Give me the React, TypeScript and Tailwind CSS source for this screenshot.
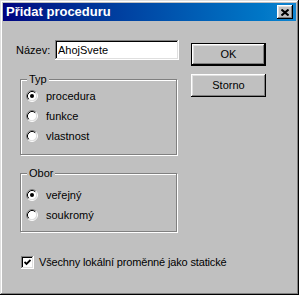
const Radio = ({ checked }: { checked?: boolean }) => (
  <svg width="12" height="12" viewBox="0 0 12 12" className="shrink-0">
    <circle cx="6" cy="6" r="4.5" fill="#fff" />
    <path d="M2.11 9.89 A5.5 5.5 0 0 1 9.89 2.11" stroke="#808080" fill="none" />
    <path d="M9.89 2.11 A5.5 5.5 0 0 1 2.11 9.89" stroke="#fff" fill="none" />
    <path d="M2.82 9.18 A4.5 4.5 0 0 1 9.18 2.82" stroke="#000" fill="none" />
    <path d="M9.18 2.82 A4.5 4.5 0 0 1 2.82 9.18" stroke="#dfdfdf" fill="none" />
    {checked && <circle cx="6" cy="6" r="2" fill="#000" />}
  </svg>
);

const Option = ({ label, checked }: { label: string; checked?: boolean }) => (
  <div className="flex items-center h-[20px] gap-[8px]">
    <Radio checked={checked} />
    <span>{label}</span>
  </div>
);

const btn =
  "w-[75px] h-[23px] flex items-center justify-center bg-[#c0c0c0] shadow-[inset_-1px_-1px_#000,inset_1px_1px_#fff,inset_-2px_-2px_#808080,inset_2px_2px_#dfdfdf]";

export default function App() {
  return (
    <div className="w-[299px] h-[295px] bg-[#c0c0c0] p-[3px] flex flex-col text-[11px] text-black font-['Liberation_Sans',Arial,sans-serif] shadow-[inset_-1px_-1px_#000,inset_1px_1px_#dfdfdf,inset_-2px_-2px_#808080,inset_2px_2px_#fff]">
      {/* title bar */}
      <div className="h-[18px] flex items-center justify-between pl-[3px] pr-[3px] bg-gradient-to-r from-[#000080] to-[#1084d0]">
        <span className="text-white font-bold text-[13px]">Přidat proceduru</span>
        <button className="w-[16px] h-[14px] flex items-center justify-center bg-[#c0c0c0] shadow-[inset_-1px_-1px_#000,inset_1px_1px_#fff,inset_-2px_-2px_#808080,inset_2px_2px_#dfdfdf]">
          <svg width="8" height="7" viewBox="0 0 8 7">
            <path d="M0.5 0.5 L7.5 6.5 M7.5 0.5 L0.5 6.5" stroke="#000" strokeWidth="2" />
          </svg>
        </button>
      </div>

      <div className="flex flex-1">
        <div className="w-[176px] pl-[13px]">
          <div className="mt-[19px] h-[20px] flex items-center gap-[6px]">
            <span className="w-[33px]">Název:</span>
            <input
              defaultValue="AhojSvete"
              className="w-[124px] h-[20px] pl-[3px] bg-white outline-none shadow-[inset_-1px_-1px_#fff,inset_1px_1px_#808080,inset_-2px_-2px_#dfdfdf,inset_2px_2px_#000]"
            />
          </div>

          <div className="relative mt-[19px] ml-[4px] w-[157px] border border-[#808080] shadow-[1px_1px_#fff,inset_1px_1px_#fff] pl-[5px] pt-[6px] pb-[8px]">
            <span className="absolute -top-[7px] left-[6px] px-[2px] bg-[#c0c0c0] leading-[13px]">Typ</span>
            <Option label="procedura" checked />
            <Option label="funkce" />
            <Option label="vlastnost" />
          </div>

          <div className="relative mt-[18px] ml-[4px] w-[157px] border border-[#808080] shadow-[1px_1px_#fff,inset_1px_1px_#fff] pl-[5px] pt-[11px] pb-[6px]">
            <span className="absolute -top-[7px] left-[6px] px-[2px] bg-[#c0c0c0] leading-[13px]">Obor</span>
            <Option label="veřejný" checked />
            <Option label="soukromý" />
          </div>

          <div className="mt-[22px] ml-[5px] flex items-center gap-[5px]">
            <div className="shrink-0 w-[13px] h-[13px] bg-white flex items-center justify-center shadow-[inset_-1px_-1px_#fff,inset_1px_1px_#808080,inset_-2px_-2px_#dfdfdf,inset_2px_2px_#000]">
              <svg width="7" height="7" viewBox="0 0 7 7">
                <path d="M0.5 3 L2.5 5 L6.5 1" stroke="#000" strokeWidth="1.8" fill="none" />
              </svg>
            </div>
            <span className="whitespace-nowrap tracking-[-0.15px]">Všechny lokální proměnné jako statické</span>
          </div>
        </div>

        <div className="ml-[12px] pt-[22px] flex flex-col gap-[8px]">
          <button className={btn + " border border-black"}>OK</button>
          <button className={btn}>Storno</button>
        </div>
      </div>
    </div>
  );
}
